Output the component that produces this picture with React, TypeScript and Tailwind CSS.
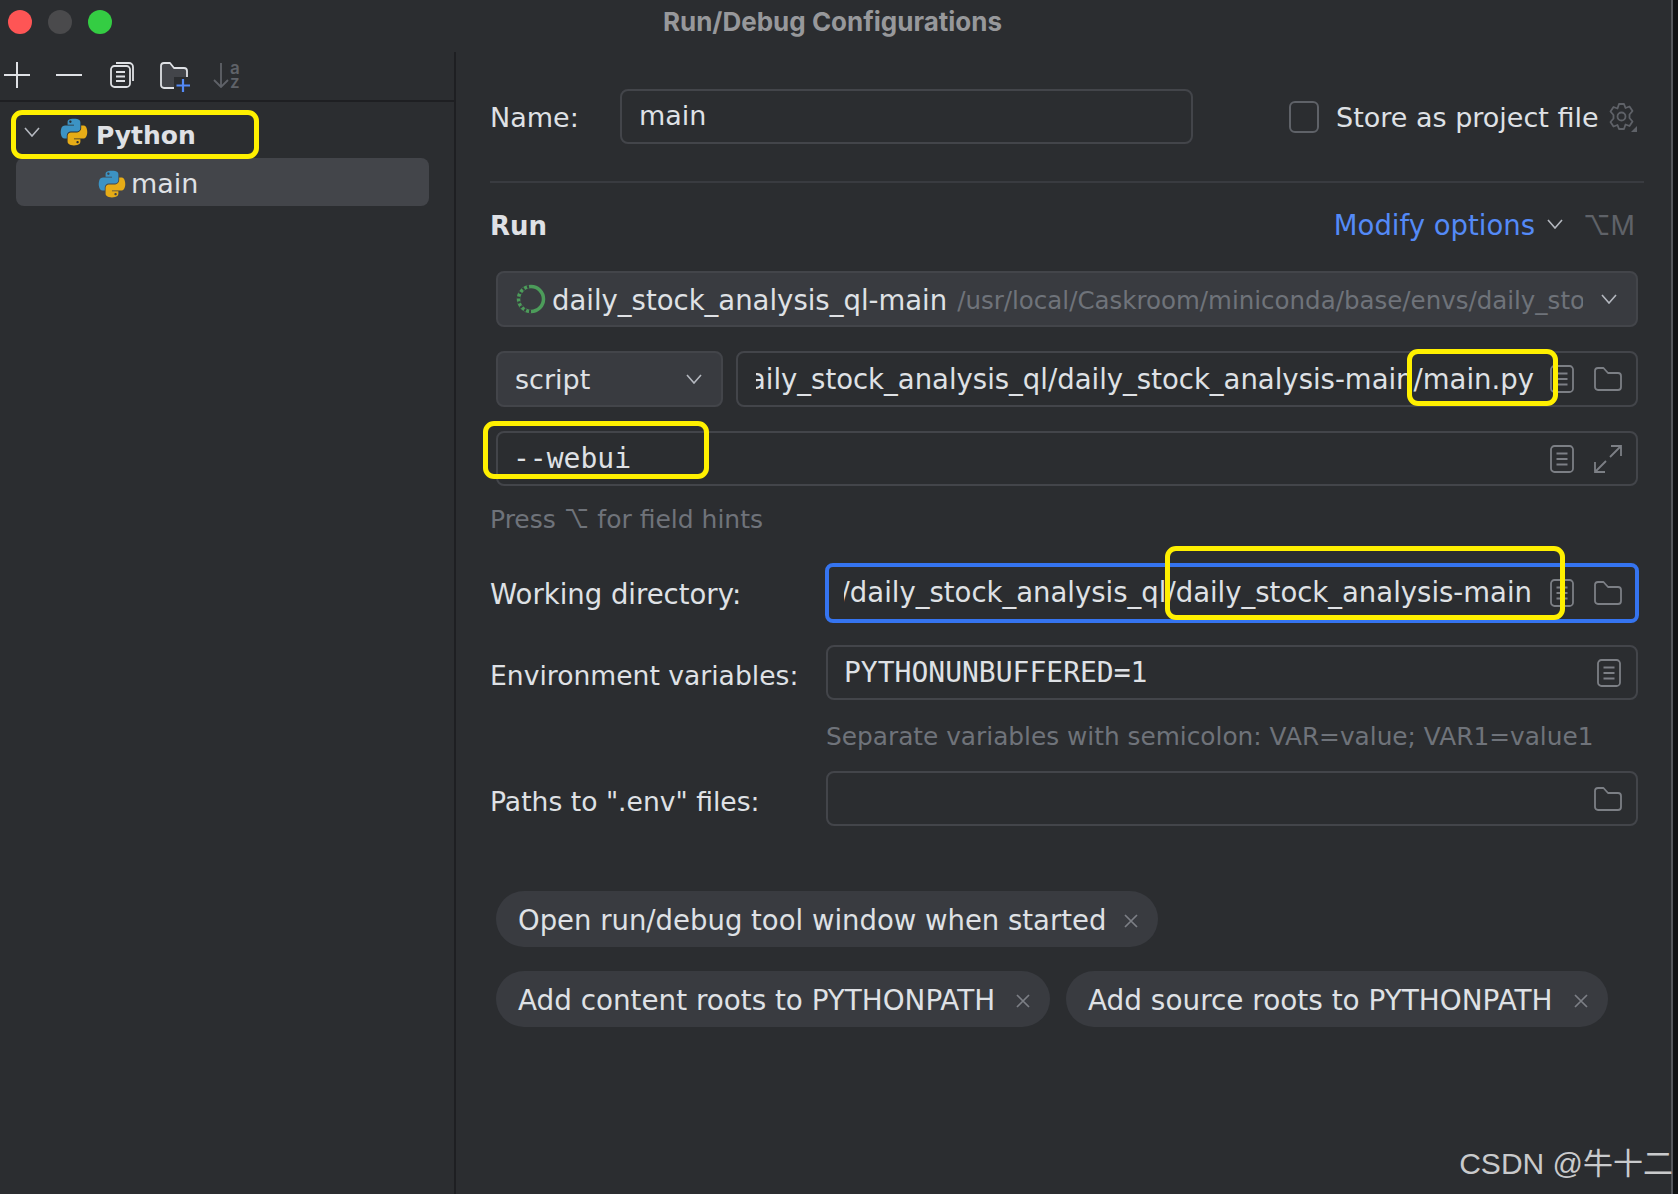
import React from 'react';

const BODY = "font-['DejaVu_Sans',sans-serif]";
const MONO = "font-['DejaVu_Sans_Mono',monospace]";

const PythonIcon: React.FC<{ className?: string }> = ({ className }) => (
  <svg viewBox="10 0 108 107" className={className}>
    <path
      fill="#3c93c4"
      d="M63.391 1.988c-4.222.02-8.252.379-11.8 1.007-10.45 1.846-12.346 5.71-12.346 12.837v9.411h24.693v3.137H29.977c-7.176 0-13.46 4.313-15.426 12.521-2.268 9.405-2.368 15.275 0 25.096 1.755 7.311 5.947 12.519 13.124 12.519h8.491V67.234c0-8.151 7.051-15.34 15.426-15.34h24.665c6.866 0 12.346-5.654 12.346-12.548V15.833c0-6.693-5.646-11.72-12.346-12.837-4.244-.706-8.645-1.027-12.866-1.008zM50.037 9.557c2.55 0 4.634 2.117 4.634 4.721 0 2.593-2.083 4.69-4.634 4.69-2.56 0-4.633-2.097-4.633-4.69-.001-2.604 2.073-4.721 4.633-4.721z"
    />
    <path
      fill="#e6ac17"
      d="M91.682 28.38v10.966c0 8.5-7.208 15.655-15.426 15.655H51.591c-6.756 0-12.346 5.783-12.346 12.549v23.515c0 6.691 5.818 10.628 12.346 12.547 7.816 2.297 15.312 2.713 24.665 0 6.216-1.801 12.346-5.423 12.346-12.547v-9.412H63.938v-3.138h37.012c7.176 0 9.852-5.005 12.348-12.519 2.578-7.735 2.467-15.174 0-25.096-1.774-7.145-5.161-12.521-12.348-12.521H91.682zM77.809 87.927c2.561 0 4.634 2.097 4.634 4.692 0 2.602-2.074 4.719-4.634 4.719-2.55 0-4.633-2.117-4.633-4.719 0-2.595 2.083-4.692 4.633-4.692z"
    />
  </svg>
);

const DocIcon: React.FC<{ className?: string }> = ({ className }) => (
  <svg viewBox="0 0 24 28" fill="none" stroke="#7c7f85" strokeWidth="1.8" className={className}>
    <rect x="1" y="1" width="22" height="26" rx="3.5" />
    <path d="M6.5 8.5h11M6.5 14h11M6.5 19.5h11" />
  </svg>
);

const FolderIcon: React.FC<{ className?: string }> = ({ className }) => (
  <svg viewBox="0 0 28 24" fill="none" stroke="#7c7f85" strokeWidth="1.8" className={className}>
    <path d="M1 4a3 3 0 0 1 3-3h5.5l4.5 5h10a3 3 0 0 1 3 3v11a3 3 0 0 1-3 3H4a3 3 0 0 1-3-3z" strokeLinejoin="round" />
  </svg>
);

const ExpandIcon: React.FC<{ className?: string }> = ({ className }) => (
  <svg viewBox="0 0 28 28" fill="none" stroke="#7c7f85" strokeWidth="1.8" className={className}>
    <path d="M16 12 27 1M17 1h10v10M12 16 1 27M1 17v10h10" />
  </svg>
);

const Chevron: React.FC<{ className?: string; color?: string }> = ({ className, color = '#b4b8bf' }) => (
  <svg viewBox="0 0 16 10" fill="none" stroke={color} strokeWidth="1.6" className={className}>
    <path d="m1 1 7 8 7-8" />
  </svg>
);

const GearIcon: React.FC = () => (
  <svg viewBox="0 0 30 30" fill="none" stroke="#5f6268" strokeWidth="1.8" className="w-[30px] h-[30px]">
    <path d="M12 2h5l1.500 4 4-1.500 3 4.500-3 3.500v3.500l3 3.500-3 4.500-4-1.500L17 27h-5l-1.500-4-4 1.500-3-4.500 3-3.500V13l-3-3.500 3-4.500 4 1.500z" strokeLinejoin="round" />
    <circle cx="14.500" cy="14.500" r="4" />
    <path d="M30 24v6h-6z" fill="#5f6268" stroke="none" />
  </svg>
);

const CloseIcon: React.FC = () => (
  <svg viewBox="0 0 14 14" fill="none" stroke="#7c7f85" strokeWidth="1.7" className="w-[14px] h-[14px] shrink-0">
    <path d="m1 1 12 12M13 1 1 13" />
  </svg>
);

const Field: React.FC<{ className?: string; children?: React.ReactNode }> = ({ className = '', children }) => (
  <div className={`flex items-center h-[55px] rounded-[8px] border-2 border-[#43454a] ${className}`}>{children}</div>
);

const Chip: React.FC<{ label: string; className: string; textClass?: string }> = ({ label, className, textClass = 'text-[27.5px]' }) => (
  <div className={`flex items-center justify-between h-[56px] rounded-full bg-[#393b40] pt-[4px] pl-[22px] pr-[20px] ${className}`}>
    <span className={`text-[#dfe1e5] whitespace-nowrap ${textClass}`}>{label}</span>
    <CloseIcon />
  </div>
);

const Marker: React.FC<{ className: string }> = ({ className }) => (
  <div className={`absolute border-[5px] border-[#fff000] rounded-[11px] pointer-events-none ${className}`} />
);

const Sidebar: React.FC = () => (
  <div className="w-[456px] shrink-0 border-r-2 border-[#1e1f22]">
    <div className="flex items-center h-[50px] pb-[2px] border-b-2 border-[#1e1f22]">
      <svg viewBox="0 0 26 26" fill="none" stroke="#dfe1e5" strokeWidth="2" className="w-[26px] h-[26px] ml-[4px]">
        <path d="M13 0v26M0 13h26" />
      </svg>
      <svg viewBox="0 0 26 26" fill="none" stroke="#dfe1e5" strokeWidth="2" className="w-[26px] h-[26px] ml-[26px]">
        <path d="M0 13h26" />
      </svg>
      <svg viewBox="0 0 24 26" fill="none" stroke="#dfe1e5" strokeWidth="1.800" className="w-[24px] h-[26px] ml-[28px]">
        <rect x="1" y="4" width="19" height="21" rx="3.500" />
        <path d="M6 10h9M6 14.500h9M6 19h9" />
        <path d="M6 1h13a4 4 0 0 1 4 4v14" />
      </svg>
      <svg viewBox="0 0 30 30" fill="none" className="w-[30px] h-[30px] ml-[26px] mt-[3px]">
        <path d="M1 4a3 3 0 0 1 3-3h6l4 5h10a3 3 0 0 1 3 3v14a3 3 0 0 1-3 3H4a3 3 0 0 1-3-3z" fill="#43454a" stroke="#dfe1e5" strokeWidth="1.800" strokeLinejoin="round" />
        <rect x="14" y="15" width="16" height="15" fill="#2b2d30" />
        <path d="M23 17v13M16.500 23.500H30" stroke="#548af7" strokeWidth="2.200" />
      </svg>
      <div className="flex items-center ml-[23px]">
        <svg viewBox="0 0 16 26" fill="none" stroke="#5f6268" strokeWidth="1.800" className="w-[16px] h-[26px]">
          <path d="M8 1v24M1 18l7 7 7-7" />
        </svg>
        <div className="flex flex-col ml-[1px] text-[#5f6268] text-[17px] font-['Inter',sans-serif] font-semibold leading-[14px]">
          <span>a</span>
          <span>z</span>
        </div>
      </div>
    </div>
    <div className="flex items-center h-[56px] pt-[4px] pl-[24px]">
      <Chevron className="w-[16px] h-[10px]" />
      <PythonIcon className="w-[28px] h-[28px] ml-[20px]" />
      <span className="ml-[8px] pt-[8px] text-[#dfe1e5] text-[25px] font-bold">Python</span>
    </div>
    <div className="flex items-center h-[48px] mx-[16px] mr-[25px] pt-[4px] rounded-[8px] bg-[#43454a] pl-[82px]">
      <PythonIcon className="w-[28px] h-[28px]" />
      <span className="ml-[5px] text-[#dfe1e5] text-[27px]">main</span>
    </div>
  </div>
);

const ConfigForm: React.FC = () => (
  <div className="flex-1 min-w-0 pl-[34px] pr-[33px] text-[#dfe1e5] text-[27px]">
    <div className="flex items-center mt-[37px]">
      <span className="w-[130px] shrink-0 pt-[4px]">Name:</span>
      <Field className="w-[573px] h-[54px] pl-[17px]">
        <span>main</span>
      </Field>
      <div className="ml-[96px] w-[30px] h-[32px] rounded-[6px] border-2 border-[#5f6268]" />
      <span className="ml-[17px] pt-[4px] whitespace-nowrap">Store as project file</span>
      <div className="ml-[8px]">
        <GearIcon />
      </div>
    </div>

    <div className="mt-[37px] h-[2px] -mr-[6px] bg-[#393b40]" />

    <div className="flex items-center justify-between h-[40px] mt-[23px]">
      <span className="font-bold text-[26px]">Run</span>
      <div className="flex items-center">
        <span className="text-[#548af7] text-[27.5px]">Modify options</span>
        <Chevron className="w-[16px] h-[10px] ml-[12px] -mt-[4px]" />
        <span className="ml-[20px] mr-[3px] text-[#5f6268] font-['Inter',sans-serif]">⌥M</span>
      </div>
    </div>

    <div className="ml-[6px]">
      <Field className="h-[56px] mt-[25px] bg-[#393b40] pl-[18px] pr-[19px]">
        <svg viewBox="0 0 30 30" fill="none" className="w-[30px] h-[30px] shrink-0">
          <circle cx="15" cy="15" r="12.500" stroke="#4c9c5a" strokeWidth="3.500" />
          <path d="M15 27.500A12.500 12.500 0 0 1 15 2.500" stroke="#393b40" strokeWidth="3.500" strokeDasharray="2 3" />
        </svg>
        <span className="ml-[6px] pt-[4px] text-[27.5px] whitespace-nowrap">daily_stock_analysis_ql-main</span>
        <span className="ml-[10px] pt-[4px] text-[#6f737a] text-[24.500px] whitespace-nowrap flex-1 min-w-0 overflow-hidden">/usr/local/Caskroom/miniconda/base/envs/daily_sto</span>
        <Chevron className="w-[16px] h-[10px] ml-[18px] shrink-0" />
      </Field>

      <div className="flex mt-[24px] gap-[13px]">
        <Field className="w-[227px] h-[56px] shrink-0 bg-[#393b40] pl-[17px] pr-[19px] justify-between">
          <span className="pt-[2px]">script</span>
          <Chevron className="w-[16px] h-[10px]" />
        </Field>
        <Field className="flex-1 min-w-0 h-[56px] pr-[14px]">
          <div className="flex-1 min-w-0 ml-[18px] pt-[2px] flex justify-end overflow-hidden">
            <span className="whitespace-nowrap shrink-0 text-[27.5px]">daily_stock_analysis_ql/daily_stock_analysis-main/main.py</span>
          </div>
          <DocIcon className="w-[24px] h-[28px] shrink-0 ml-[16px]" />
          <FolderIcon className="w-[28px] h-[24px] shrink-0 ml-[20px]" />
        </Field>
      </div>

      <Field className="mt-[24px] pl-[15px] pr-[14px] justify-between">
        <span className={`${MONO} text-[28px]`}>--webui</span>
        <div className="flex items-center">
          <DocIcon className="w-[24px] h-[28px]" />
          <ExpandIcon className="w-[28px] h-[28px] ml-[20px]" />
        </div>
      </Field>
    </div>

    <div className="flex items-center h-[36px] mt-[15px] pt-[2px] text-[#6f737a] text-[25px]">
      Press <span className="mx-[8px] font-['Inter',sans-serif]">⌥</span> for field hints
    </div>

    <div className="flex items-center mt-[26px]">
      <span className="w-[335px] shrink-0 pt-[4px] text-[27.5px]">Working directory:</span>
      <div className="flex-1 min-w-0 flex items-center h-[60px] -mr-[1px] rounded-[8px] border-[4px] border-[#3574f0] pr-[13px]">
        <div className="flex-1 min-w-0 ml-[15px] flex justify-end overflow-hidden">
          <span className="whitespace-nowrap shrink-0 text-[27.5px]">/daily_stock_analysis_ql/daily_stock_analysis-main</span>
        </div>
        <DocIcon className="w-[24px] h-[28px] shrink-0 ml-[18px]" />
        <FolderIcon className="w-[28px] h-[24px] shrink-0 ml-[20px]" />
      </div>
    </div>

    <div className="flex items-center mt-[22px]">
      <span className="w-[336px] shrink-0 pt-[6px] text-[26.6px] whitespace-nowrap">Environment variables:</span>
      <Field className="flex-1 min-w-0 pl-[16px] pr-[15px] justify-between">
        <span className={`${MONO} text-[28px]`}>PYTHONUNBUFFERED=1</span>
        <DocIcon className="w-[24px] h-[28px]" />
      </Field>
    </div>

    <div className="flex items-center h-[36px] mt-[17px] pt-[4px] pl-[336px] text-[#6f737a] text-[24.800px] whitespace-nowrap">
      Separate variables with semicolon: VAR=value; VAR1=value1
    </div>

    <div className="flex items-center mt-[18px]">
      <span className="w-[336px] shrink-0 pt-[6px] text-[26.6px]">Paths to ".env" files:</span>
      <Field className="flex-1 min-w-0 pr-[14px] justify-end">
        <FolderIcon className="w-[28px] h-[24px]" />
      </Field>
    </div>

    <div className="ml-[6px]">
      <Chip label="Open run/debug tool window when started" className="w-[662px] mt-[65px]" />
      <div className="flex gap-[16px] mt-[24px]">
        <Chip label="Add content roots to PYTHONPATH" className="w-[554px]" textClass="text-[27.8px]" />
        <Chip label="Add source roots to PYTHONPATH" className="w-[542px]" textClass="text-[27.9px]" />
      </div>
    </div>
  </div>
);

const App: React.FC = () => {
  return (
    <div className={`relative w-[1678px] h-[1194px] overflow-hidden bg-[#111214] ${BODY}`}>
      <div className="w-[1673px] h-[1194px] flex flex-col bg-[#2b2d30] border-r-2 border-[#55575c]">
        <div className="relative flex items-center justify-center h-[52px] shrink-0">
          <div className="absolute left-[8px] top-[10px] flex gap-[16px]">
            <div className="w-[24px] h-[24px] rounded-full bg-[#fe5555]" />
            <div className="w-[24px] h-[24px] rounded-full bg-[#4a4a4c]" />
            <div className="w-[24px] h-[24px] rounded-full bg-[#34cd43]" />
          </div>
          <span className="font-['Inter',sans-serif] font-bold text-[26px] text-[#97989b] -mt-[10px] -ml-[6px]">Run/Debug Configurations</span>
        </div>
        <div className="flex flex-1 min-h-0">
          <Sidebar />
          <ConfigForm />
        </div>
      </div>

      <Marker className="left-[11px] top-[110px] w-[248px] h-[49px]" />
      <Marker className="left-[1407px] top-[349px] w-[151px] h-[57px]" />
      <Marker className="left-[483px] top-[421px] w-[226px] h-[58px]" />
      <Marker className="left-[1165px] top-[546px] w-[400px] h-[74px]" />

      <span className="absolute right-[5px] bottom-[8px] text-[30px] text-[#c9cacc] font-['Liberation_Sans','Noto_Sans_CJK_SC',sans-serif] whitespace-nowrap">
        CSDN @牛十二
      </span>
    </div>
  );
};

export default App;
